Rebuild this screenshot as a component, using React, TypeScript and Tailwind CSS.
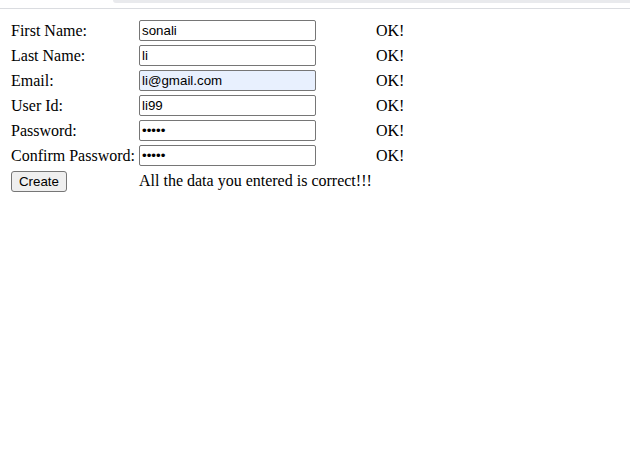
import React from 'react';

const rows: Array<{ label: string; value: string; type: string; autofill?: boolean }> = [
  { label: 'First Name:', value: 'sonali', type: 'text' },
  { label: 'Last Name:', value: 'li', type: 'text' },
  { label: 'Email:', value: 'li@gmail.com', type: 'text', autofill: true },
  { label: 'User Id:', value: 'li99', type: 'text' },
  { label: 'Password:', value: 'sonal', type: 'password' },
  { label: 'Confirm Password:', value: 'sonal', type: 'password' },
];

export default function App() {
  return (
    <div className="min-h-[467px] w-[630px] bg-white font-['Liberation_Serif',serif] text-[16px] text-black">
      {/* browser chrome edge */}
      <div className="h-[9px] border-b border-[#dadce0]">
        <div className="ml-[113px] h-[3px] rounded-bl-[6px] bg-[#e9eaed]" />
      </div>

      <div className="flex flex-col gap-[4px] px-[11px] pt-[11px]">
        {rows.map((r) => (
          <div key={r.label} className="flex h-[21px] items-center">
            <span className="w-[128px] shrink-0 whitespace-nowrap leading-[18px]">{r.label}</span>
            <input
              readOnly
              type={r.type}
              value={r.value}
              className={`h-[21px] w-[177px] rounded-[2px] border border-[#767676] px-[2px] py-[1px] font-['Liberation_Sans',Arial,sans-serif] text-[13.33px] text-black outline-none ${
                r.autofill ? 'bg-[#e8f0fe]' : 'bg-white'
              }`}
            />
            <span className="ml-[60px] leading-[18px]">OK!</span>
          </div>
        ))}
        <div className="flex h-[21px] items-center">
          <div className="w-[128px] shrink-0">
            <button className="h-[21px] w-[56px] rounded-[3px] border border-[#767676] bg-[#efefef] font-['Liberation_Sans',Arial,sans-serif] text-[13.33px] leading-[17px] text-black">
              Create
            </button>
          </div>
          <span className="whitespace-nowrap leading-[18px]">All the data you entered is correct!!!</span>
        </div>
      </div>
    </div>
  );
}
